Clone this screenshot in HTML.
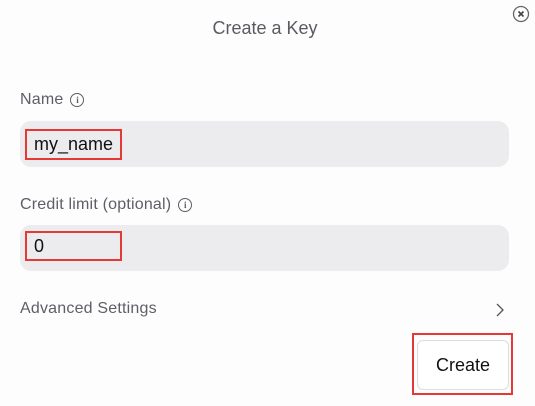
<!DOCTYPE html>
<html><head><style>
body{margin:0;width:535px;height:406px;background:#fdfdfd;font-family:"Liberation Sans",sans-serif;position:relative;overflow:hidden}
.a{position:absolute}
.lbl{font-size:16px;color:#5e5e66;letter-spacing:0.2px}
.inp{left:20px;width:489px;height:46px;background:#ececee;border-radius:11px}
.red{border:2px solid #e53935;box-sizing:border-box}
.info{display:inline-block;width:12px;height:12px;border:1.3px solid #5e5e66;border-radius:50%;font-size:9px;line-height:12px;text-align:center;vertical-align:1px;margin-left:7px;font-family:"Liberation Serif",serif;font-weight:bold;letter-spacing:0}
</style></head><body>
<div class="a" style="left:0;width:530px;top:18px;text-align:center;font-size:18px;color:#5a5a62">Create a Key</div>
<svg class="a" style="left:511px;top:4px" width="20" height="20"><circle cx="10" cy="10" r="7.5" fill="none" stroke="#666" stroke-width="1.3"/><path d="M7.5 7.5L12.5 12.5M12.5 7.5L7.5 12.5" stroke="#444" stroke-width="1.6"/></svg>
<div class="a lbl" style="left:20px;top:91px">Name<span class="info">i</span></div>
<div class="a inp" style="top:121px"></div>
<div class="a red" style="left:25px;top:129px;width:97px;height:31px"></div>
<div class="a" style="left:34px;top:134px;font-size:18px;color:#111">my_name</div>
<div class="a lbl" style="left:20px;top:196px">Credit limit (optional)<span class="info">i</span></div>
<div class="a inp" style="top:225px"></div>
<div class="a red" style="left:25px;top:231px;width:97px;height:30px"></div>
<div class="a" style="left:34px;top:236px;font-size:18px;color:#111">0</div>
<div class="a lbl" style="left:20px;top:300px">Advanced Settings</div>
<svg class="a" style="left:494px;top:302px" width="12" height="16"><path d="M3 2L9 8L3 14" fill="none" stroke="#555" stroke-width="1.3"/></svg>
<div class="a red" style="left:412px;top:333px;width:101px;height:62px"></div>
<div class="a" style="left:417px;top:340px;width:92px;height:50px;background:#fff;border:1px solid #ddd;border-radius:6px;box-sizing:border-box;text-align:center;line-height:48px;font-size:18px;color:#111">Create</div>
</body></html>
